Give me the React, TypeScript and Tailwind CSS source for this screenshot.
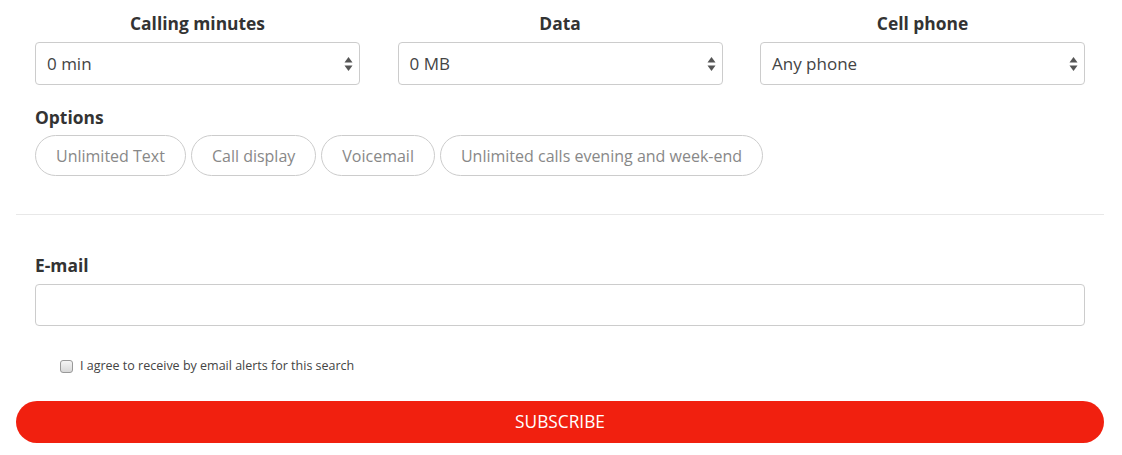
import { useState } from 'react'

const selects = [
  { label: 'Calling minutes', value: '0 min' },
  { label: 'Data', value: '0 MB' },
  { label: 'Cell phone', value: 'Any phone' },
]

const options = ['Unlimited Text', 'Call display', 'Voicemail', 'Unlimited calls evening and week-end']

function Arrows() {
  return (
    <svg width="9" height="16" viewBox="0 0 9 16" className="shrink-0">
      <path d="M4.5 1 L8.5 6.5 L0.5 6.5 Z" fill="#555" />
      <path d="M4.5 15 L8.5 9.5 L0.5 9.5 Z" fill="#555" />
    </svg>
  )
}

export default function App() {
  const [agree, setAgree] = useState(false)

  return (
    <div className="w-[1122px] h-[455px] bg-white font-['Open_Sans',sans-serif] text-[#333]">
      <div className="ml-4 w-[1088px]">
        <div className="px-[19px] pt-[11px]">
          <div className="flex justify-between">
            {selects.map((s) => (
              <div key={s.label} className="w-[325px] flex flex-col">
                <div className="text-center font-bold text-[17.4px] leading-6 text-[#333]">{s.label}</div>
                <div className="mt-[7px] h-[43px] border border-[#ccc] rounded-[4px] flex items-center justify-between pl-[11px] pr-[6px]">
                  <span className="text-[17px] text-[#444]">{s.value}</span>
                  <Arrows />
                </div>
              </div>
            ))}
          </div>

          <div className="mt-[20px] font-bold text-[17.4px] leading-6">Options</div>
          <div className="mt-[6px] flex gap-[5px]">
            {options.map((o) => (
              <button
                key={o}
                className="h-[41px] pt-[1px] px-[20px] rounded-full border border-[#ccc] text-[16px] text-[#888] bg-white"
              >
                {o}
              </button>
            ))}
          </div>
        </div>

        <div className="mt-[38px] border-t border-[#e8e8e8]" />

        <div className="px-[19px]">
          <div className="mt-[38px] font-bold text-[17.4px] leading-6">E-mail</div>
          <input className="mt-[7px] block w-full h-[42px] border border-[#ccc] rounded-[4px] px-3 outline-none" />

          <label className="mt-[31px] ml-[25px] flex items-center gap-[7px] text-[12.5px] text-[#444]">
            <span
              onClick={() => setAgree(!agree)}
              className={`w-[13px] h-[13px] rounded-[3px] border border-[#999] ${agree ? 'bg-[#888]' : 'bg-gradient-to-b from-[#f4f4f4] to-[#d8d8d8]'}`}
            />
            I agree to receive by email alerts for this search
          </label>
        </div>

        <button className="mt-[25px] w-full h-[42px] rounded-full bg-[#f1200f] text-white text-[17.3px] uppercase">
          Subscribe
        </button>
      </div>
    </div>
  )
}
